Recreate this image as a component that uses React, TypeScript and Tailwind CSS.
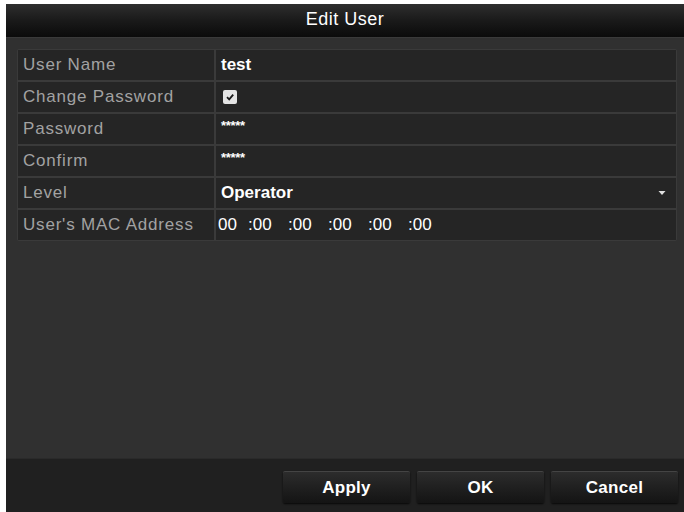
import React from "react"

const rows = [
    { label: "User Name", kind: "text", value: "test" },
    { label: "Change Password", kind: "check" },
    { label: "Password", kind: "pwd" },
    { label: "Confirm", kind: "pwd" },
    { label: "Level", kind: "select", value: "Operator" },
    { label: "User's MAC Address", kind: "mac" },
]

const Value = ({ row }: any) => {
    if (row.kind === "check") {
        return (
            <div className="w-[14px] h-[14px] bg-[#e4e4e4] rounded-[2px] flex items-center justify-center ml-[2px]">
                <svg width="10" height="10" viewBox="0 0 10 10">
                    <path d="M2 5.2 L4.2 7.4 L8.2 2.6" stroke="#1a1a1a" strokeWidth="1.8" fill="none" />
                </svg>
            </div>
        )
    }
    if (row.kind === "pwd") {
        return <span className="text-white font-bold text-[13px] tracking-[-0.3px] leading-none -mt-[8px]">*****</span>
    }
    if (row.kind === "mac") {
        return (
            <div className="flex text-white text-[17px] -ml-[3px]">
                <span className="w-[30px]">00</span>
                {[0, 1, 2, 3, 4].map((i) => (
                    <span key={i} className="w-[40px]">:00</span>
                ))}
            </div>
        )
    }
    return <span className="text-white font-bold text-[17px]">{row.value}</span>
}

export default function App() {
    return (
        <div className="w-[684px] h-[512px] bg-white pl-[6px] pt-[4px] overflow-hidden" style={{ fontFamily: "'Liberation Sans', Arial, sans-serif" }}>
            <div className="w-[678px] h-[508px] flex flex-col bg-[#303030]">
                {/* title */}
                <div className="h-[33px] bg-gradient-to-b from-[#2e2e2e] via-[#1a1a1a] to-[#0b0b0b] flex items-center justify-center text-white text-[18px] tracking-[0.5px] pb-[2px]">
                    Edit User
                </div>

                <div className="flex-1 pl-[11px] pr-[7px] pt-[11px] border-t border-[#3a3a3a]">
                    <div className="flex flex-col gap-[2px] bg-[#3a3a3a] p-[1px] rounded-[2px]">
                        {rows.map((r) => (
                            <div key={r.label} className="flex gap-[2px] h-[30px]">
                                <div className="w-[196px] bg-[#252525] flex items-center pl-[5px] text-[#a2a2a2] text-[17px] tracking-[0.8px]">
                                    {r.label}
                                </div>
                                <div className="flex-1 bg-[#252525] flex items-center pl-[5px] pr-[10px]">
                                    <Value row={r} />
                                    {r.kind === "select" && (
                                        <svg className="ml-auto" width="8" height="6" viewBox="0 0 8 6">
                                            <path d="M0.5 1 L7.5 1 L4 5 Z" fill="#e0e0e0" />
                                        </svg>
                                    )}
                                </div>
                            </div>
                        ))}
                    </div>
                </div>

                {/* footer */}
                <div className="h-[54px] bg-[#202020] flex items-start justify-end gap-[7px] pr-[6px] pt-[12px] border-t border-[#2a2a2a]">
                    {["Apply", "OK", "Cancel"].map((b) => (
                        <button key={b} className="w-[127px] h-[32px] bg-gradient-to-b from-[#2c2c2c] to-[#141414] border-t border-[#444] shadow-[0_1px_2px_rgba(0,0,0,0.8)] rounded-[2px] text-white font-bold text-[17px] tracking-[0.3px]">
                            {b}
                        </button>
                    ))}
                </div>
            </div>
        </div>
    )
}
